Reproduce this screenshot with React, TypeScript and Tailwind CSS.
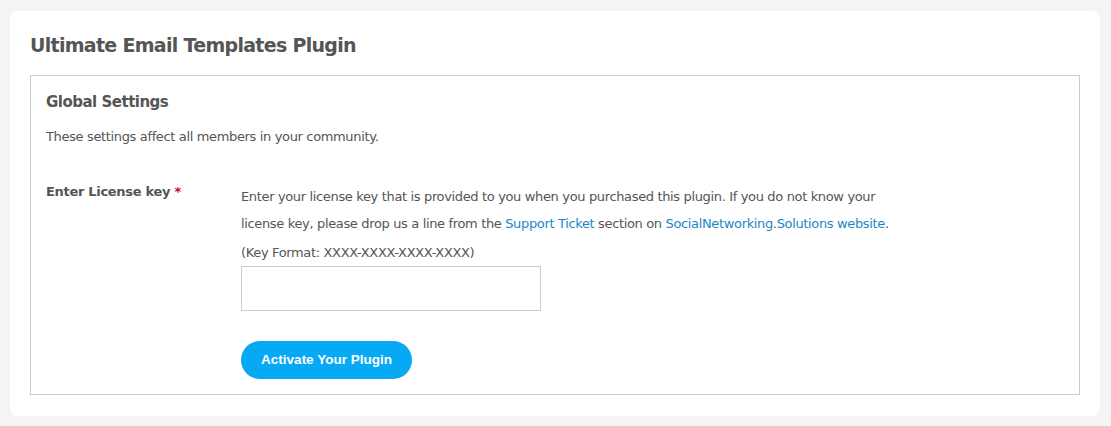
import React from "react";

export default function App() {
  const font = { fontFamily: '"DejaVu Sans", Verdana, sans-serif' };
  return (
    <div className="min-h-[426px] w-full bg-[#f4f4f4] pt-[11px] pl-[10px] pr-[11px] pb-[11px]" style={font}>
      <div className="rounded-[8px] bg-white px-[20px] pt-[21px] pb-[21px]">
        <h1 className="text-[19px] font-bold leading-[26px] text-[#555] tracking-[-0.7px]">
          Ultimate Email Templates Plugin
        </h1>
        <div className="mt-[17px] border border-[#ccc] px-[15px] pt-[15px] pb-[15px]">
          <h2 className="text-[15px] font-bold leading-[22px] text-[#555] tracking-[-0.5px]">Global Settings</h2>
          <p className="mt-[14px] text-[13px] leading-[20px] text-[#555] tracking-[-0.35px]">
            These settings affect all members in your community.
          </p>
          <div className="mt-[35px] flex">
            <div className="w-[195px] shrink-0 text-[13px] font-bold leading-[20px] text-[#555] tracking-[-0.3px]">
              Enter License key <span className="text-[#d0021b]">*</span>
            </div>
            <div>
              <p className="mt-[1px] w-[660px] text-[13px] leading-[27px] text-[#555] tracking-[-0.35px]">
                Enter your license key that is provided to you when you purchased this plugin. If you do not know your
                license key, please drop us a line from the{" "}
                <span className="text-[#1a87c9]">Support Ticket</span> section on{" "}
                <span className="text-[#1a87c9]">SocialNetworking.Solutions website</span>.
              </p>
              <p className="mt-[1px] text-[13px] leading-[30px] text-[#555] tracking-[-0.35px]">
                (Key Format: XXXX-XXXX-XXXX-XXXX)
              </p>
              <input
                type="text"
                className="mt-[-2px] block h-[45px] w-[300px] border border-[#ccc] bg-white outline-none"
              />
              <button
                className="mt-[30px] block h-[38px] w-[171px] rounded-full bg-[#05a9f4] text-[13.5px] font-bold text-white"
                style={{ fontFamily: '"Liberation Sans", Arial, sans-serif' }}
              >
                Activate Your Plugin
              </button>
            </div>
          </div>
        </div>
      </div>
    </div>
  );
}
